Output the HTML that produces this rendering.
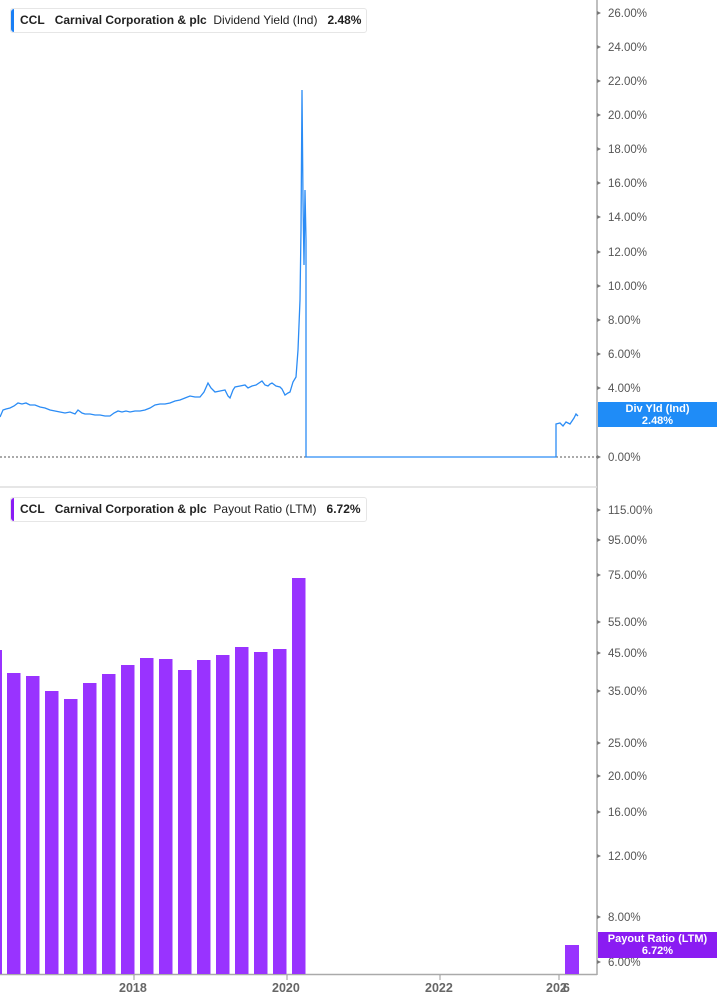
<!DOCTYPE html>
<html><head><meta charset="utf-8"><style>
html,body{margin:0;padding:0;background:#fff;width:717px;height:1005px;overflow:hidden;font-family:"Liberation Sans",sans-serif}
.leg{position:absolute;left:10px;height:23px;border:1px solid #e6e6e6;border-radius:3px;background:#fff;font-size:12px;color:#222;line-height:23px;padding:0 5px 0 9px;white-space:nowrap}
.leg:before{content:"";position:absolute;left:0;top:0;bottom:0;width:3px;border-radius:3px 0 0 3px}
.b1:before{background:#1a7ff5}.b2:before{background:#8a1cf5}
.leg b{font-weight:bold}
.ax{position:absolute;left:608px;font-size:11.5px;color:#555}
.yr{position:absolute;top:981px;font-size:12.5px;font-weight:bold;color:#666}
.lab{position:absolute;left:598px;width:119px;color:#fff;font-size:11px;font-weight:bold;text-align:center;line-height:12px}
</style></head><body>
<svg width="717" height="1005" style="position:absolute;left:0;top:0">
<line x1="597" y1="0" x2="597" y2="975" stroke="#aaa" stroke-width="1.5"/>
<line x1="0" y1="487" x2="597" y2="487" stroke="#ddd" stroke-width="1.5"/>
<line x1="0" y1="457" x2="597" y2="457" stroke="#555" stroke-dasharray="2,2"/>
<line x1="0" y1="974.5" x2="597" y2="974.5" stroke="#aaa" stroke-width="1.5"/>
<g stroke="#999"><line x1="134" y1="975" x2="134" y2="980"/><line x1="287" y1="975" x2="287" y2="980"/><line x1="440" y1="975" x2="440" y2="980"/><line x1="559" y1="975" x2="559" y2="980"/></g>
<polyline fill="none" stroke="#2b8cf5" stroke-width="1.3" points="0,417 3,410 6,409 10,408 14,406 18,403 22,404 26,403 30,405 35,405 40,407 45,408 50,410 55,411 60,412 65,413 70,412 75,414 78,410 82,413 85,414 90,414 95,415 100,415 105,416 110,416 114,413 118,411 122,412 126,411 130,412 135,411 140,411 145,410 150,408 155,405 160,404 165,404 170,403 175,401 180,400 185,398 190,396 195,397 200,397 204,392 208,383 211,388 215,392 220,391 225,390 228,396 230,398 233,390 235,387 240,386 245,385 248,388 252,386 256,385 262,381 265,385 268,386 270,384 272,383 276,386 280,387 282,389 285,395 288,393 290,392 293,382 296,377 298,350 300,300 301,230 302,90 303,200 304,265 305,190 306,240 306,457 556,457 556,424 560,423 563,426 566,422 570,424 574,418 576,414 578,416"/>
<g fill="#9933ff">
<rect x="0" y="650" width="2" height="324"/>
<rect x="7" y="673" width="13.5" height="301"/>
<rect x="26" y="676" width="13.5" height="298"/>
<rect x="45" y="691" width="13.5" height="283"/>
<rect x="64" y="699" width="13.5" height="275"/>
<rect x="83" y="683" width="13.5" height="291"/>
<rect x="102" y="674" width="13.5" height="300"/>
<rect x="121" y="665" width="13.5" height="309"/>
<rect x="140" y="658" width="13.5" height="316"/>
<rect x="159" y="659" width="13.5" height="315"/>
<rect x="178" y="670" width="13.5" height="304"/>
<rect x="197" y="660" width="13.5" height="314"/>
<rect x="216" y="655" width="13.5" height="319"/>
<rect x="235" y="647" width="13.5" height="327"/>
<rect x="254" y="652" width="13.5" height="322"/>
<rect x="273" y="649" width="13.5" height="325"/>
<rect x="292" y="578" width="13.5" height="396"/>
<rect x="565" y="945" width="14" height="29"/>
</g>
<g fill="#777">
<polygon points="597,11 601,13 597,15"/><polygon points="597,45 601,47 597,49"/><polygon points="597,79 601,81 597,83"/><polygon points="597,113 601,115 597,117"/><polygon points="597,147 601,149 597,151"/><polygon points="597,181 601,183 597,185"/><polygon points="597,215 601,217 597,219"/><polygon points="597,250 601,252 597,254"/><polygon points="597,284 601,286 597,288"/><polygon points="597,318 601,320 597,322"/><polygon points="597,352 601,354 597,356"/><polygon points="597,386 601,388 597,390"/><polygon points="597,455 601,457 597,459"/>
<polygon points="597,508 601,510 597,512"/><polygon points="597,538 601,540 597,542"/><polygon points="597,573 601,575 597,577"/><polygon points="597,620 601,622 597,624"/><polygon points="597,651 601,653 597,655"/><polygon points="597,689 601,691 597,693"/><polygon points="597,741 601,743 597,745"/><polygon points="597,774 601,776 597,778"/><polygon points="597,810 601,812 597,814"/><polygon points="597,854 601,856 597,858"/><polygon points="597,915 601,917 597,919"/><polygon points="597,960 601,962 597,964"/>
</g>
</svg>
<div class="leg b1" style="top:8px"><b>CCL</b>&nbsp;&nbsp; <b>Carnival Corporation &amp; plc</b>&nbsp; Dividend Yield (Ind)&nbsp;&nbsp; <b>2.48%</b></div>
<div class="leg b2" style="top:497px"><b>CCL</b>&nbsp;&nbsp; <b>Carnival Corporation &amp; plc</b>&nbsp; Payout Ratio (LTM)&nbsp;&nbsp; <b>6.72%</b></div>
<div class="ax" style="top:8px">26.00%</div><div class="ax" style="top:42px">24.00%</div><div class="ax" style="top:76px">22.00%</div><div class="ax" style="top:110px">20.00%</div><div class="ax" style="top:144px">18.00%</div><div class="ax" style="top:178px">16.00%</div><div class="ax" style="top:212px">14.00%</div><div class="ax" style="top:247px">12.00%</div><div class="ax" style="top:281px">10.00%</div><div class="ax" style="top:315px">8.00%</div><div class="ax" style="top:349px">6.00%</div><div class="ax" style="top:383px">4.00%</div><div class="ax" style="top:417px">2.00%</div><div class="ax" style="top:452px">0.00%</div>
<div class="ax" style="top:505px">115.00%</div><div class="ax" style="top:535px">95.00%</div><div class="ax" style="top:570px">75.00%</div><div class="ax" style="top:617px">55.00%</div><div class="ax" style="top:648px">45.00%</div><div class="ax" style="top:686px">35.00%</div><div class="ax" style="top:738px">25.00%</div><div class="ax" style="top:771px">20.00%</div><div class="ax" style="top:807px">16.00%</div><div class="ax" style="top:851px">12.00%</div><div class="ax" style="top:912px">8.00%</div><div class="ax" style="top:957px">6.00%</div>
<div class="lab" style="top:402px;height:25px;background:#1f8cf7;padding-top:1px;box-sizing:border-box">Div Yld (Ind)<br>2.48%</div>
<div class="lab" style="top:932px;height:26px;background:#8a1cf2;padding-top:1px;box-sizing:border-box">Payout Ratio (LTM)<br>6.72%</div>
<div class="yr" style="left:119px">2018</div><div class="yr" style="left:272px">2020</div><div class="yr" style="left:425px">2022</div><div class="yr" style="left:546px">20<span style="letter-spacing:-4px">2</span>6</div>
</body></html>
